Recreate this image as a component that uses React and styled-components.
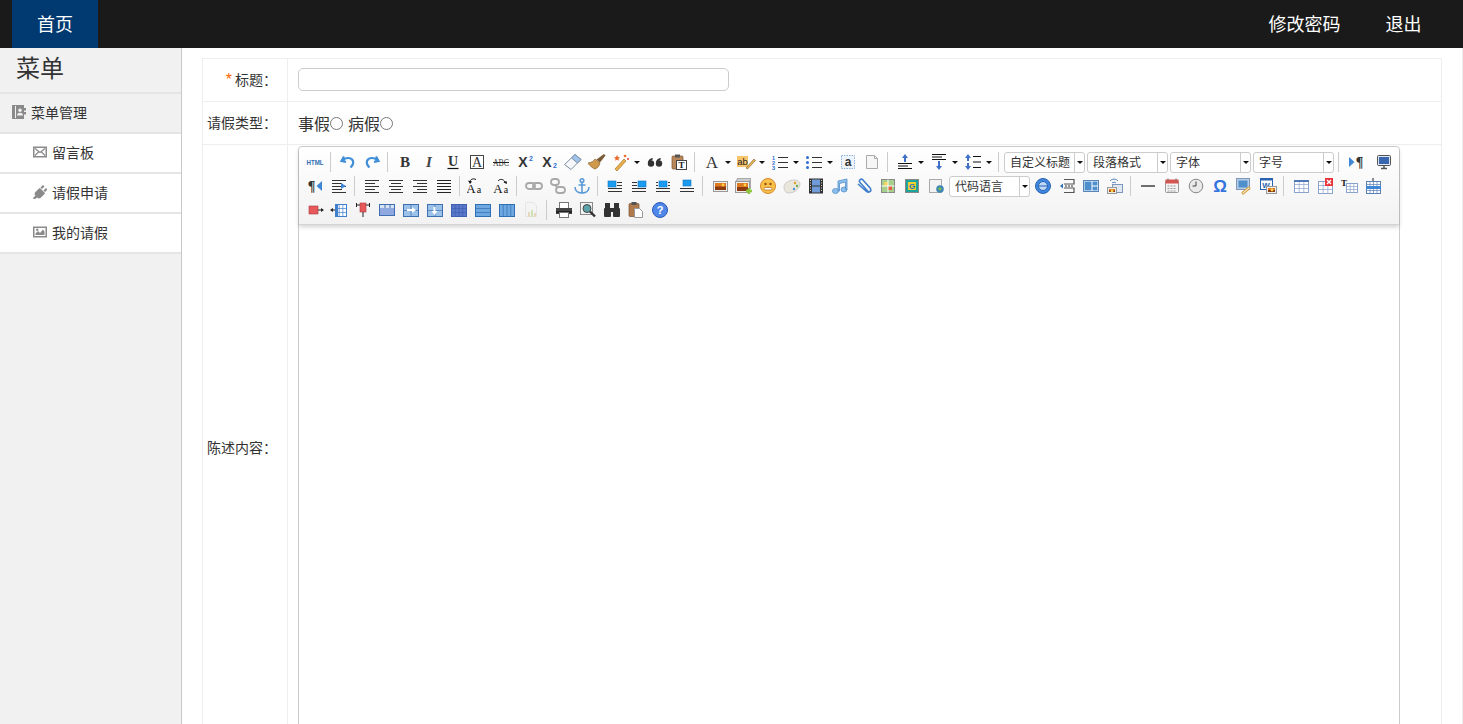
import React from 'react'
import styled, { createGlobalStyle } from 'styled-components'

const GlobalStyle = createGlobalStyle`
  html, body { margin: 0; padding: 0; height: 100%; overflow: hidden; background: #fff; }
  body { font-family: "Liberation Sans", "Noto Sans CJK SC", sans-serif; color: #333; font-size: 14px; }
  * { box-sizing: border-box; }
`

const Header = styled.header`
  height: 48px;
  background: #1a1a1a;
  display: flex;
  justify-content: space-between;
  padding: 0 19px 0 12px;
`
const NavItem = styled.a`
  display: flex;
  align-items: center;
  height: 48px;
  padding: 0 ${p => (p.$home ? 25 : 22.5)}px 2px;
  font-size: 18px;
  color: #fff;
  background: ${p => (p.$home ? '#003a70' : 'transparent')};
`
const NavRight = styled.nav`
  display: flex;
`
const Shell = styled.div`
  display: flex;
  height: 676px;
  overflow: hidden;
`
const Sidebar = styled.aside`
  width: 182px;
  flex: none;
  background: #f1f1f1;
  border-right: 1px solid #c8c8c8;
`
const SideTitle = styled.h2`
  margin: 0;
  height: 46px;
  padding-left: 16px;
  font-size: 24px;
  font-weight: 400;
  line-height: 42px;
  color: #333;
  border-bottom: 2px solid #e5e5e5;
`
const SideHead = styled.div`
  height: 40px;
  display: flex;
  align-items: center;
  gap: 5px;
  padding: 0 0 2px 12px;
  font-size: 14px;
  border-bottom: 2px solid #e5e5e5;
`
const SideItem = styled(SideHead)`
  padding-left: 33px;
  background: #fff;
`
const Main = styled.main`
  flex: 1;
  padding: 10px 20px 0;
  border-right: 1px solid #eee;
`
const FormTable = styled.table`
  width: 100%;
  table-layout: fixed;
  border-collapse: collapse;
  td { border: 1px solid #eee; }
`
const LabelCell = styled.td`
  width: 85px;
  height: 43px;
  padding: 0 10px 2px 0;
  text-align: right;
  font-size: 14px;
  white-space: nowrap;
`
const FieldCell = styled.td`
  padding: 1px 41px 0 10px;
`
const Star = styled.span`
  color: #ff6a00;
  font-size: 16px;
  margin-right: 3px;
`
const TitleInput = styled.input`
  display: block;
  width: 431px;
  height: 23px;
  margin-top: -3px;
  border: 1px solid #ccc;
  border-radius: 5px;
  background: #fff;
`
const Radios = styled.div`
  display: flex;
  align-items: center;
  margin-top: -2px;
  font-size: 16px;
  color: #333;
`
const Radio = styled.span`
  width: 13px;
  height: 13px;
  margin: 2px 5px 0 0;
  border: 1px solid #777;
  border-radius: 50%;
  background: #fff;
`
const Editor = styled.div`
  height: 602px;
  width: 1102px;
  margin-bottom: 2px;
  border: 1px solid #ccc;
  border-radius: 4px 4px 0 0;
`
const Toolbar = styled.div`
  height: 78px;
  padding: 3px 4px 0;
  background: linear-gradient(to bottom, #fff, #f2f2f2);
  border-bottom: 1px solid #d4d4d4;
  border-radius: 4px 4px 0 0;
  box-shadow: 0 2px 4px rgba(0, 0, 0, 0.18);
`
const ToolRow = styled.div`
  display: flex;
  align-items: center;
  height: 24px;
`
const ToolButton = styled.span`
  display: flex;
  align-items: center;
  flex: none;
  height: 20px;
  margin: 0 2px 0 ${p => (p.$gap ? 6 : 2)}px;
`
const Caret = styled.i`
  width: 0;
  height: 0;
  margin: 0 1px 0 3px;
  border: 3px solid transparent;
  border-top: 3px solid #111;
  border-bottom: 0;
`
const Separator = styled.span`
  flex: none;
  width: 1px;
  height: 20px;
  margin: 0 5px 0 3px;
  background: #ccc;
`
const Combo = styled.span`
  flex: none;
  display: flex;
  width: 81px;
  height: 21px;
  margin: 0 1px 0 ${p => (p.$flush ? 0 : 1)}px;
  background: #fff;
  border: 1px solid #ccc;
  border-radius: 3px;
  font-size: 12px;
  line-height: 19px;
  color: #333;
`
const ComboText = styled.span`
  flex: 1;
  padding: 1px 0 0 5px;
  white-space: nowrap;
`
const ComboArrow = styled.span`
  width: 10px;
  display: flex;
  align-items: center;
  justify-content: center;
  border-left: 1px solid #ccc;
  &::after {
    content: '';
    border: 3px solid transparent;
    border-top: 3px solid #111;
    border-bottom: 0;
  }
`

const serif = '"Liberation Serif", serif'
const sans = '"Liberation Sans", sans-serif'

const Lines = ({ x = 3, y = 4, w = 14, n = 4, gap = 3, color = '#333', short }) => (
  <g stroke={color} strokeWidth="1" fill="none">
    {Array.from({ length: n }, (_, i) => (
      <path key={i} d={`M${x} ${y + i * gap + 0.5}h${short && i % 2 ? w - 4 : w}`} />
    ))}
  </g>
)

const Grid = ({ x = 3, y = 4, w = 14, h = 12, cols = 3, rows = 3, color = '#5b80b8', fill = '#fff' }) => (
  <g>
    <rect x={x + 0.5} y={y + 0.5} width={w} height={h} fill={fill} stroke={color} />
    {Array.from({ length: cols - 1 }, (_, i) => (
      <path key={i} d={`M${x + 0.5 + ((i + 1) * w) / cols} ${y}v${h}`} stroke={color} strokeOpacity=".7" />
    ))}
    {Array.from({ length: rows - 1 }, (_, i) => (
      <path key={i} d={`M${x} ${y + 0.5 + ((i + 1) * h) / rows}h${w}`} stroke={color} strokeOpacity=".7" />
    ))}
  </g>
)

const Photo = ({ x = 3, y = 5, w = 14, h = 10 }) => (
  <g>
    <rect x={x + 0.5} y={y + 0.5} width={w} height={h} fill="#eee" stroke="#999" />
    <rect x={x + 2} y={y + 2} width={w - 3} height={h - 3} fill="#8c3a10" />
    <rect x={x + 2} y={y + 2} width={w - 3} height={(h - 3) / 2} fill="#e07a20" />
    <circle cx={x + w - 4} cy={y + 4} r="1.4" fill="#ffd24a" />
  </g>
)

const Img = ({ side }) => (
  <g>
    <rect x={side === 'r' ? 9 : side === 'l' ? 3 : 6} y={side === 'c' ? 4 : 5} width="8" height="6" fill="#1b9cf0" stroke="#1076c4" strokeWidth=".6" />
    {side === 'l' && <Lines x={12} y={6} w={5} n={2} gap={3} />}
    {side === 'r' && <Lines x={3} y={6} w={5} n={2} gap={3} />}
    {side === 'n' && (
      <>
        <Lines x={3} y={6} w={2} n={2} gap={3} />
        <Lines x={15} y={6} w={2} n={2} gap={3} />
      </>
    )}
    <Lines x={3} y={12} w={14} n={2} gap={3} />
  </g>
)

const icons = {
  html: (
    <text transform="translate(10 13) scale(.77 1)" fontSize="8" fontWeight="700" textAnchor="middle" fill="#2f6fb3" fontFamily={sans}>
      HTML
    </text>
  ),
  undo: (
    <path d="M6 4.5 3.5 9l4.5.8M4.5 9C7 5 13.5 5 15 9c.8 2.5-.6 4.6-2.5 6.5" fill="none" stroke="#3f8fd8" strokeWidth="2.2" />
  ),
  redo: (
    <path d="M14 4.5 16.5 9l-4.5.8M15.5 9C13 5 6.5 5 5 9c-.8 2.5.6 4.6 2.5 6.5" fill="none" stroke="#3f8fd8" strokeWidth="2.2" />
  ),
  bold: <text x="10" y="15" fontSize="15" fontWeight="700" textAnchor="middle" fontFamily={serif} fill="#333">B</text>,
  italic: <text x="10" y="15" fontSize="15" fontStyle="italic" fontWeight="700" textAnchor="middle" fontFamily={serif} fill="#444">I</text>,
  underline: (
    <g>
      <text x="10" y="14" fontSize="14" textAnchor="middle" fontFamily={serif} fontWeight="700" fill="#333">U</text>
      <path d="M4.5 16.5h11" stroke="#111" strokeWidth="1.2" />
    </g>
  ),
  fontborder: (
    <g>
      <rect x="3.5" y="3.5" width="13" height="13" fill="#fff" stroke="#444" />
      <text x="10" y="15" fontSize="14" textAnchor="middle" fontFamily={serif} fill="#333">A</text>
    </g>
  ),
  strike: (
    <g>
      <text transform="translate(10 13.5) scale(.78 1)" fontSize="10" textAnchor="middle" fontFamily={serif} fill="#444">ABC</text>
      <path d="M2 10.5h16" stroke="#222" />
    </g>
  ),
  sup: (
    <g>
      <text x="8" y="15" fontSize="14" fontWeight="700" textAnchor="middle" fontFamily={sans} fill="#333">X</text>
      <text x="16" y="9" fontSize="7" fontWeight="700" textAnchor="middle" fontFamily={sans} fill="#2f6fd0">2</text>
    </g>
  ),
  sub: (
    <g>
      <text x="8" y="15" fontSize="14" fontWeight="700" textAnchor="middle" fontFamily={sans} fill="#333">X</text>
      <text x="16" y="16" fontSize="7" fontWeight="700" textAnchor="middle" fontFamily={sans} fill="#2f6fd0">2</text>
    </g>
  ),
  eraser: (
    <g stroke="#7f8fa6" strokeLinejoin="round">
      <path d="M1.5 12.5 12 2.5l6 5L8 17.500z" fill="#f6f7f9" />
      <path d="M12 2.5l6 5-3.5 3.5-6-5z" fill="#9fc3ea" />
    </g>
  ),
  brush: (
    <g>
      <path d="M1 11c4-.5 6-2 7-4l5 4c-1 3-2 5-5 6-2-.5-5-3-7-6z" fill="#cf9a4c" stroke="#8a5f24" strokeWidth=".7" />
      <path d="M9.5 7.5 17 2l1.5 1.5-5.5 7z" fill="#7b5a36" />
    </g>
  ),
  wand: (
    <g>
      <path d="M4 17 13 7l2 2-9 10z" fill="#e8b04c" stroke="#a8752a" strokeWidth=".7" />
      <path d="M6 3l1 2 2 .4-1.5 1.3.4 2.1L6 7.800 4.200 8.800l.3-2.100L3 5.400l2-.4z" fill="#ef6a2c" />
      <circle cx="14" cy="4" r="1.3" fill="#ef6a2c" />
      <circle cx="17" cy="7" r="1" fill="#e83c3c" />
    </g>
  ),
  quote: (
    <g fill="#333">
      <circle cx="6" cy="11.5" r="3.2" />
      <path d="M3 11c0-3 2-4.5 4.5-5L8 7.200C6.5 7.700 5.800 8.800 5.800 11z" />
      <circle cx="14" cy="11.5" r="3.2" />
      <path d="M11 11c0-3 2-4.5 4.5-5l.5 1.200c-1.5.5-2.200 1.600-2.200 3.800z" />
    </g>
  ),
  pasteT: (
    <g>
      <rect x="3" y="4" width="11" height="13" rx="1" fill="#b9875a" stroke="#7a5230" strokeWidth=".7" />
      <rect x="6" y="2.5" width="5" height="3" fill="#555" />
      <rect x="7.5" y="8.5" width="10" height="9" fill="#fff" stroke="#444" />
      <text x="12.5" y="16.2" fontSize="9" fontWeight="700" textAnchor="middle" fontFamily={serif} fill="#222">T</text>
    </g>
  ),
  fontA: <text x="10" y="15.5" fontSize="17" textAnchor="middle" fontFamily={serif} fill="#333">A</text>,
  highlight: (
    <g>
      <rect x="1" y="4" width="11" height="11" fill="#f8c56a" />
      <text x="6.5" y="13" fontSize="9.5" textAnchor="middle" fontFamily={sans} fill="#222">ab</text>
      <path d="M10 16 18 7l1.5 1.5-8 8.5z" fill="#e9b54e" stroke="#7b5a26" strokeWidth=".6" />
    </g>
  ),
  ol: (
    <g>
      <text x="3.5" y="7.5" fontSize="5.5" fontWeight="700" textAnchor="middle" fontFamily={sans} fill="#2f6fd0">1</text>
      <text x="3.5" y="12.8" fontSize="5.5" fontWeight="700" textAnchor="middle" fontFamily={sans} fill="#2f6fd0">2</text>
      <text x="3.5" y="18" fontSize="5.5" fontWeight="700" textAnchor="middle" fontFamily={sans} fill="#2f6fd0">3</text>
      <Lines x={8} y={5} w={10} n={3} gap={5} />
    </g>
  ),
  ul: (
    <g>
      <circle cx="3.5" cy="5.5" r="1.5" fill="#2f6fd0" />
      <circle cx="3.5" cy="10.5" r="1.5" fill="#2f6fd0" />
      <circle cx="3.5" cy="15.5" r="1.5" fill="#2f6fd0" />
      <Lines x={8} y={5} w={10} n={3} gap={5} />
    </g>
  ),
  autotext: (
    <g>
      <rect x="3.5" y="3.5" width="13" height="13" fill="#eef4fb" stroke="#8fb2da" strokeDasharray="1.5 1" />
      <text x="10" y="14" fontSize="12" fontWeight="700" textAnchor="middle" fontFamily={sans} fill="#333">a</text>
    </g>
  ),
  page: <path d="M4.5 3.5h8l3 3v10h-11zM12.5 3.5v3h3" fill="#f6f6f6" stroke="#aaa" />,
  spaceBefore: (
    <g>
      <path d="M10 2l3 4h-2v4H9V6H7z" fill="#3f70c8" />
      <Lines x={3} y={11} w={14} n={3} gap={2.5} color="#111" short />
    </g>
  ),
  spaceAfter: (
    <g>
      <Lines x={3} y={2} w={14} n={3} gap={2.5} color="#111" short />
      <path d="M10 18l3-4h-2V9H9v5H7z" fill="#3f70c8" />
    </g>
  ),
  lineHeight: (
    <g>
      <path d="M5 2l3 4H6v3H4V6H2zM5 18l3-4H6v-3H4v3H2z" fill="#3f70c8" />
      <Lines x={10} y={4} w={8} n={3} gap={5.5} color="#111" />
    </g>
  ),
  ltr: (
    <g>
      <path d="M3 5l5.5 5L3 15z" fill="#3f86d6" />
      <text x="13.5" y="14.5" fontSize="14" fontWeight="700" textAnchor="middle" fontFamily={serif} fill="#333">¶</text>
    </g>
  ),
  monitor: (
    <g>
      <rect x="3.5" y="3.5" width="13" height="10" rx="1" fill="#dfe6f0" stroke="#555" />
      <rect x="5" y="5" width="10" height="7" fill="#3a66b0" />
      <path d="M7 16.5h6M10 14v2" stroke="#555" strokeWidth="1.5" />
    </g>
  ),
  rtl: (
    <g>
      <text x="6.5" y="14.5" fontSize="14" fontWeight="700" textAnchor="middle" fontFamily={serif} fill="#333">¶</text>
      <path d="M17 5l-5.5 5 5.5 5z" fill="#3f86d6" />
    </g>
  ),
  indent: (
    <g>
      <Lines n={5} short />
      <path d="M12 7l5 3-5 3z" fill="#3f86d6" />
    </g>
  ),
  alignL: <Lines n={5} short />,
  alignC: (
    <g>
      <Lines n={3} gap={6} />
      <Lines x={5} y={7} w={10} n={2} gap={6} />
    </g>
  ),
  alignR: (
    <g>
      <Lines n={3} gap={6} />
      <Lines x={7} y={7} w={10} n={2} gap={6} />
    </g>
  ),
  justify: <Lines n={5} color="#222" />,
  caseUp: (
    <g transform="translate(-3 0)">
      <path d="M6 6c0-2.5 3-4 6-2.5" fill="none" stroke="#111" />
      <path d="M4 4.5 6 8l2-2.5z" fill="#111" />
      <text x="7" y="17" fontSize="13" textAnchor="middle" fontFamily={serif} fill="#111">A</text>
      <text x="15" y="17" fontSize="10" textAnchor="middle" fontFamily={serif} fill="#111">a</text>
    </g>
  ),
  caseDown: (
    <g>
      <path d="M7 5c2-2.5 5.5-2 7 1" fill="none" stroke="#111" />
      <path d="M16 8 12.5 6.5l3-1.5z" fill="#111" />
      <text x="7" y="17" fontSize="13" textAnchor="middle" fontFamily={serif} fill="#111">A</text>
      <text x="15" y="17" fontSize="10" textAnchor="middle" fontFamily={serif} fill="#111">a</text>
    </g>
  ),
  link: (
    <g fill="none" stroke="#a9a9a9" strokeWidth="1.8">
      <rect x="2" y="7" width="9" height="6" rx="3" />
      <rect x="9" y="7" width="9" height="6" rx="3" />
    </g>
  ),
  unlink: (
    <g fill="none" stroke="#a9a9a9" strokeWidth="1.8">
      <rect x="3" y="3" width="8" height="6" rx="3" />
      <rect x="8" y="11" width="9" height="6" rx="3" />
      <path d="M8 9v2" />
    </g>
  ),
  anchor: (
    <g fill="none" stroke="#5a9ad8" strokeWidth="1.6">
      <circle cx="10" cy="4.5" r="1.8" />
      <path d="M10 6.500V17M6.500 9h7M3 11c0 4 3.500 6 7 6s7-2 7-6" />
    </g>
  ),
  imgL: <Img side="l" />,
  imgR: <Img side="r" />,
  imgC: <Img side="n" />,
  imgB: <Img side="c" />,
  image: <Photo />,
  images: (
    <g>
      <rect x="3.5" y="2.5" width="13" height="10" fill="#eee" stroke="#aaa" />
      <rect x="2.5" y="4" width="13" height="10" fill="#eee" stroke="#aaa" />
      <Photo x={1} y={5} w={14} h={11} />
      <path d="M15 12v6M12 15h6" stroke="#8cc63f" strokeWidth="2.4" />
    </g>
  ),
  emoji: (
    <g>
      <circle cx="10" cy="10" r="7.5" fill="#f8c24a" stroke="#d9872a" />
      <circle cx="7.5" cy="8" r="1.2" fill="#9a4b10" />
      <circle cx="12.5" cy="8" r="1.2" fill="#9a4b10" />
      <rect x="6" y="11.5" width="8" height="2.5" rx="1.2" fill="#fff" stroke="#9a4b10" strokeWidth=".6" />
    </g>
  ),
  palette: (
    <g>
      <path d="M2 11c0-4 5-7 10-7 4 0 6 2 6 4 0 4-5 9-11 9-3 0-5-2-5-6z" fill="#e9e6dc" stroke="#bbb" strokeWidth=".7" />
      <circle cx="13" cy="7" r="1.2" fill="#e0a030" />
      <circle cx="15" cy="10" r="1.2" fill="#6ab04c" />
      <circle cx="12" cy="13" r="1.2" fill="#4a90d9" />
    </g>
  ),
  film: (
    <g>
      <rect x="3" y="2.5" width="14" height="15" fill="#333" />
      <rect x="6" y="3.5" width="8" height="6" fill="#6f9bd8" />
      <rect x="6" y="10.5" width="8" height="6" fill="#6f9bd8" />
      <path d="M4.5 4v12M15.5 4v12" stroke="#ccc" strokeDasharray="1 1.5" />
    </g>
  ),
  music: (
    <g fill="#8fc0ec" stroke="#4f8fcc" strokeWidth=".8">
      <ellipse cx="5.5" cy="15" rx="3" ry="2.5" />
      <ellipse cx="14" cy="13.5" rx="3" ry="2.5" />
      <path d="M8 15V5l9-2v10.5h-1.5V6L9.5 7.5V15z" />
    </g>
  ),
  clip: (
    <path d="M16 15.5 7 5.500c-2-2 1-4.500 3-2.500l7.500 8.500c1.200 2.500-1.500 5-4 3L5 7" fill="none" stroke="#3f7fcc" strokeWidth="1.6" transform="translate(-1 1)" />
  ),
  map: (
    <g>
      <rect x="3.5" y="3.5" width="13" height="13" fill="#a8d08d" stroke="#888" />
      <rect x="6" y="6" width="4" height="4" fill="#f4d35e" />
      <rect x="10" y="10" width="4" height="4" fill="#e85d3a" />
      <path d="M3.5 10h13M10 3.500v13" stroke="#fff" />
    </g>
  ),
  gmap: (
    <g>
      <rect x="3.5" y="3.5" width="13" height="13" fill="#1ba39c" stroke="#888" />
      <rect x="6" y="6" width="8" height="8" fill="#f2d22e" />
      <text x="10" y="13" fontSize="8" fontWeight="700" textAnchor="middle" fontFamily={sans} fill="#1b6fc4">G</text>
    </g>
  ),
  frame: (
    <g>
      <rect x="3.5" y="3.5" width="12" height="13" fill="#f3f3f3" stroke="#aaa" />
      <circle cx="14" cy="13" r="3.8" fill="#3f86b6" />
      <path d="M12 12c1.500-1 3-.5 4 1-1 1-2 1.500-3 1.500z" fill="#7bbf4a" />
    </g>
  ),
  safari: (
    <g>
      <circle cx="10" cy="10" r="7.5" fill="#3f86e0" stroke="#2a63b0" />
      <circle cx="10" cy="10" r="4.5" fill="#bcd8f6" stroke="#2a63b0" />
      <path d="M6 10h8" stroke="#2a63b0" />
    </g>
  ),
  pageBreak: (
    <g>
      <path d="M7 3.500h10V8H7M7 16.500h10V12H7" fill="none" stroke="#555" strokeWidth="1.2" />
      <path d="M3 10l3-2.500v5z" fill="#2f6fb3" />
      <path d="M8 10h9" stroke="#333" strokeDasharray="2 1" />
    </g>
  ),
  layout: (
    <g>
      <rect x="2.5" y="4.5" width="15" height="11" fill="#fff" stroke="#5a84b8" />
      <rect x="3.5" y="5.5" width="7" height="9" fill="#4f8fcc" />
      <rect x="11.5" y="5.5" width="5" height="4" fill="#4f8fcc" />
      <rect x="11.5" y="10.5" width="5" height="4" fill="#4f8fcc" />
    </g>
  ),
  remote: (
    <g>
      <path d="M5 5c2-2.500 6-2.500 8 0M7 7c1-1 3-1 4 0" fill="none" stroke="#5a84b8" />
      <rect x="7.5" y="8.5" width="10" height="8" fill="#dfe8f3" stroke="#7d97b8" />
      <Photo x={2} y={11} w={9} h={6} />
    </g>
  ),
  hr: <path d="M3 10h14" stroke="#222" strokeWidth="1.3" />,
  calendar: (
    <g>
      <rect x="3.5" y="4.5" width="13" height="12" rx="1" fill="#f4f4f4" stroke="#999" />
      <rect x="3.5" y="3.5" width="13" height="4" fill="#d9534f" />
      <path d="M6 2.500v3M14 2.500v3" stroke="#777" />
      <path d="M5.500 10h9M5.500 12.500h9M5.500 15h9" stroke="#999" strokeDasharray="2 1" />
    </g>
  ),
  clock: (
    <g>
      <circle cx="10" cy="10" r="6.8" fill="#e9e9e9" stroke="#888" />
      <path d="M10 5.500V10H6.500" fill="none" stroke="#444" />
    </g>
  ),
  omega: <text x="10" y="16" fontSize="17" fontWeight="700" textAnchor="middle" fontFamily={sans} fill="#3373e0">Ω</text>,
  linkDoc: (
    <g>
      <rect x="2.5" y="2.5" width="13" height="11" fill="#b6cde8" stroke="#7d97b8" />
      <rect x="4.5" y="4.5" width="9" height="7" fill="#4f8fcc" />
      <path d="M9 17l6-5" stroke="#d9a441" strokeWidth="3" strokeLinecap="round" />
      <path d="M9 17l6-5" stroke="#fff" strokeWidth="1" strokeLinecap="round" />
    </g>
  ),
  word: (
    <g>
      <rect x="2.5" y="2.5" width="12" height="11" fill="#fff" stroke="#2a63b0" />
      <path d="M2.500 2.500h12v2h-12z" fill="#2a63b0" />
      <text x="8" y="12" fontSize="8" fontWeight="700" textAnchor="middle" fontFamily={sans} fill="#2a63b0">W</text>
      <Photo x={8} y={10} w={10} h={7} />
    </g>
  ),
  table: (
    <g>
      <Grid color="#8aa3cc" />
      <rect x="3" y="4" width="15" height="2" fill="#4f78b8" />
    </g>
  ),
  tableDel: (
    <g>
      <Grid y={5} color="#8aa3cc" />
      <rect x="10" y="2" width="8" height="8" fill="#e8343a" />
      <path d="M12 4l4 4M16 4l-4 4" stroke="#fff" strokeWidth="1.4" />
    </g>
  ),
  tableTitle: (
    <g>
      <Grid x={7} y={7} w={11} h={9} color="#8aa3cc" />
      <text x="5" y="9.5" fontSize="9" fontWeight="700" textAnchor="middle" fontFamily={serif} fill="#111">T</text>
    </g>
  ),
  tableRow: (
    <g>
      <Grid x={3} y={5} h={12} cols={4} rows={4} />
      <rect x="3" y="10" width="15" height="3" fill="#3f86d6" />
      <path d="M10 2v3" stroke="#222" />
    </g>
  ),
  delRow: (
    <g>
      <rect x="4" y="6" width="9" height="8" fill="#e8595c" stroke="#a83a3c" strokeWidth=".6" />
      <path d="M13 10h4" stroke="#222" />
      <path d="M19 10l-3-2v4z" fill="#222" />
    </g>
  ),
  colLeft: (
    <g>
      <Grid x={6} y={4} w={11} h={12} color="#3f7fcc" />
      <rect x="6" y="4" width="3" height="12" fill="#3f7fcc" />
      <path d="M1 10l3-2v4z" fill="#222" />
      <path d="M3 10h3" stroke="#222" />
    </g>
  ),
  delCol: (
    <g>
      <rect x="7" y="3" width="6" height="9" fill="#e8595c" stroke="#a83a3c" strokeWidth=".6" />
      <path d="M3.500 3v4M16.500 3v4M3.500 5H7M13 5h3.500M10 12v5" stroke="#222" fill="none" />
    </g>
  ),
  headTable: (
    <g>
      <rect x="2.5" y="4.5" width="15" height="11" fill="#8fa8e0" stroke="#3f6fb0" />
      <rect x="3" y="5" width="14" height="3" fill="#d8e4f6" />
      <path d="M8 5v3M13 5v3" stroke="#3f6fb0" />
    </g>
  ),
  mergeRight: (
    <g>
      <Grid x={2} y={4} w={15} h={12} rows={2} cols={2} color="#3f6fb0" fill="#9cc2ea" />
      <path d="M6 10h6" stroke="#fff" strokeWidth="2" />
      <path d="M11 7l4 3-4 3z" fill="#fff" />
    </g>
  ),
  mergeDown: (
    <g>
      <Grid x={2} y={4} w={15} h={12} rows={2} cols={2} color="#3f6fb0" fill="#9cc2ea" />
      <path d="M9.500 7v5" stroke="#fff" strokeWidth="2" />
      <path d="M6.500 11l3 4 3-4z" fill="#fff" />
    </g>
  ),
  splitAll: <Grid x={2} y={4} w={15} h={12} cols={4} rows={3} color="#3f5fb0" fill="#5a78c8" />,
  splitRows: <Grid x={2} y={4} w={15} h={12} cols={1} rows={3} color="#2f6fb3" fill="#6fa8e0" />,
  splitCols: <Grid x={2} y={4} w={15} h={12} cols={4} rows={1} color="#2f6fb3" fill="#6fa8e0" />,
  charts: (
    <g opacity=".35">
      <path d="M4.500 2.500h8l3 3v11h-11z" fill="#f4f4f4" stroke="#ccc" />
      <rect x="7" y="12" width="2" height="5" fill="#c9a45c" />
      <rect x="10" y="10" width="2" height="7" fill="#8cc63f" />
      <rect x="13" y="13" width="2" height="4" fill="#c9a45c" />
    </g>
  ),
  print: (
    <g>
      <rect x="5.5" y="2.5" width="9" height="6" fill="#fff" stroke="#777" />
      <rect x="2" y="8" width="16" height="6" fill="#444" />
      <rect x="2" y="11" width="16" height="2" fill="#222" />
      <rect x="5.5" y="12.5" width="9" height="5" fill="#fff" stroke="#777" />
    </g>
  ),
  preview: (
    <g>
      <rect x="2.5" y="2.5" width="12" height="12" fill="#f4f4f4" stroke="#888" />
      <circle cx="9" cy="8.5" r="4" fill="#5ba3a8" stroke="#444" />
      <path d="M12 11.500l5 5" stroke="#333" strokeWidth="2.4" />
    </g>
  ),
  binoculars: (
    <g fill="#333">
      <rect x="3" y="3" width="5" height="5" />
      <rect x="12" y="3" width="5" height="5" />
      <rect x="2" y="8" width="7" height="9" rx="1" />
      <rect x="11" y="8" width="7" height="9" rx="1" />
      <rect x="8" y="8" width="4" height="4" />
    </g>
  ),
  pasteDoc: (
    <g>
      <rect x="3" y="3.5" width="10" height="13" rx="1" fill="#b07a4c" stroke="#7a5230" strokeWidth=".7" />
      <rect x="5.5" y="2" width="5" height="3" fill="#555" />
      <path d="M8.500 8.500h5l3 3v6h-8z" fill="#fff" stroke="#999" />
    </g>
  ),
  help: (
    <g>
      <circle cx="10" cy="10" r="7.5" fill="#4f86e8" stroke="#2a5cb8" />
      <text x="10" y="14" fontSize="11" fontWeight="700" textAnchor="middle" fontFamily={sans} fill="#fff">?</text>
    </g>
  ),
}

const Icon = ({ name }) => (
  <svg width="20" height="20" viewBox="0 0 20 20">
    {icons[name]}
  </svg>
)

const S = { sep: true }
const D = name => ({ name, drop: true })
const C = (label, flush) => ({ label, flush })

const toolRows = [
  [
    'html', S, 'undo', 'redo', S, 'bold', 'italic', 'underline', 'fontborder', 'strike', 'sup', 'sub', 'eraser', 'brush',
    D('wand'), 'quote', 'pasteT', S, D('fontA'), D('highlight'), D('ol'), D('ul'), 'autotext', 'page', S,
    D('spaceBefore'), D('spaceAfter'), D('lineHeight'), S,
    C('自定义标题', true), C('段落格式'), C('字体'), C('字号'), S, 'ltr', { name: 'monitor', gap: true },
  ],
  [
    'rtl', 'indent', S, 'alignL', 'alignC', 'alignR', 'justify', S, 'caseUp', 'caseDown', S,
    'link', 'unlink', 'anchor', S, 'imgL', 'imgR', 'imgC', 'imgB', S,
    'image', 'images', 'emoji', 'palette', 'film', 'music', 'clip', 'map', 'gmap', 'frame', C('代码语言'),
    'safari', 'pageBreak', 'layout', 'remote', S, 'hr', 'calendar', 'clock', 'omega', 'linkDoc', 'word', S,
    'table', 'tableDel', 'tableTitle', 'tableRow',
  ],
  [
    'delRow', 'colLeft', 'delCol', 'headTable', 'mergeRight', 'mergeDown', 'splitAll', 'splitRows', 'splitCols', 'charts', S,
    'print', 'preview', 'binoculars', 'pasteDoc', 'help',
  ],
]

const ToolItem = ({ item }) => {
  if (item.sep) return <Separator />
  if (item.label) {
    return (
      <Combo $flush={item.flush}>
        <ComboText>{item.label}</ComboText>
        <ComboArrow />
      </Combo>
    )
  }
  const name = item.name || item
  return (
    <ToolButton $gap={item.gap}>
      <Icon name={name} />
      {item.drop && <Caret />}
    </ToolButton>
  )
}

const SideIcon = ({ children }) => (
  <svg width="14" height="14" viewBox="0 0 14 14" fill="#8a8a8a">
    {children}
  </svg>
)

export default function App() {
  return (
    <>
      <GlobalStyle />
      <Header>
        <NavItem $home>首页</NavItem>
        <NavRight>
          <NavItem>修改密码</NavItem>
          <NavItem>退出</NavItem>
        </NavRight>
      </Header>
      <Shell>
        <Sidebar>
          <SideTitle>菜单</SideTitle>
          <SideHead>
            <SideIcon>
              <path d="M0 0h12v3h2v2.500h-2V7h2v2.500h-2V14H0zM3 1v12h1V1zM8 3.500a1.800 1.800 0 1 0 0 3.600 1.800 1.800 0 0 0 0-3.600zM5 10.500h6c0-2-1.200-2.800-3-2.800s-3 .8-3 2.800z" fillRule="evenodd" />
            </SideIcon>
            菜单管理
          </SideHead>
          <SideItem>
            <SideIcon>
              <path d="M0 1.500h14v11H0zM1.500 3v8h11V3z" fillRule="evenodd" />
              <path d="M2 3.500l5 4 5-4M2 10.500l3.500-3.500M12 10.500 8.500 7" fill="none" stroke="#8a8a8a" strokeWidth="1.2" />
            </SideIcon>
            留言板
          </SideItem>
          <SideItem>
            <SideIcon>
              <path d="M0 13l2.500-2.500-1-1 .5-2 4-4 1-.5 5 5-.5 1-4 4-2 .5-1-1L1 14.500zM7.500 2.500 10 0l1.500 1.500L9 4zM10.500 5.500 13 3l1.500 1.500L12 7z" />
            </SideIcon>
            请假申请
          </SideItem>
          <SideItem>
            <SideIcon>
              <path d="M0 1.500h14v11H0zM1.500 3v8h11V3z" fillRule="evenodd" />
              <path d="M2.500 10V8.500L5 6l2 2 3-3.500 1.500 2V10z" />
              <circle cx="4.2" cy="4.8" r="1.2" />
            </SideIcon>
            我的请假
          </SideItem>
        </Sidebar>
        <Main>
          <FormTable>
            <tbody>
              <tr>
                <LabelCell><Star>*</Star>标题：</LabelCell>
                <FieldCell><TitleInput /></FieldCell>
              </tr>
              <tr>
                <LabelCell>请假类型：</LabelCell>
                <FieldCell>
                  <Radios>事假<Radio />病假<Radio /></Radios>
                </FieldCell>
              </tr>
              <tr>
                <LabelCell>陈述内容：</LabelCell>
                <FieldCell>
                  <Editor>
                    <Toolbar>
                      {toolRows.map((row, r) => (
                        <ToolRow key={r}>
                          {row.map((item, i) => <ToolItem key={i} item={item} />)}
                        </ToolRow>
                      ))}
                    </Toolbar>
                  </Editor>
                </FieldCell>
              </tr>
            </tbody>
          </FormTable>
        </Main>
      </Shell>
    </>
  )
}
